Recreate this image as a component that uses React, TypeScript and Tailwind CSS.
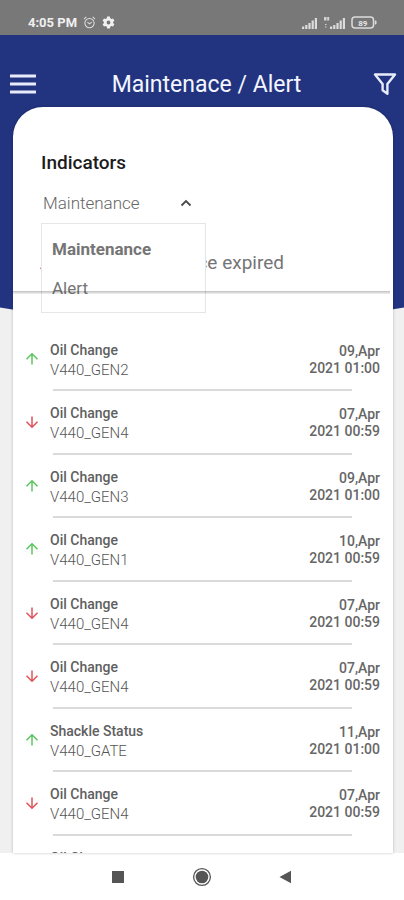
import React from 'react';

type Entry = {
  title: string;
  device: string;
  day: string;
  time: string;
  up?: boolean;
};

const entries: Entry[] = [
  { title: 'Oil Change', device: 'V440_GEN2', day: '09,Apr', time: '2021 01:00', up: true },
  { title: 'Oil Change', device: 'V440_GEN4', day: '07,Apr', time: '2021 00:59' },
  { title: 'Oil Change', device: 'V440_GEN3', day: '09,Apr', time: '2021 01:00', up: true },
  { title: 'Oil Change', device: 'V440_GEN1', day: '10,Apr', time: '2021 00:59', up: true },
  { title: 'Oil Change', device: 'V440_GEN4', day: '07,Apr', time: '2021 00:59' },
  { title: 'Oil Change', device: 'V440_GEN4', day: '07,Apr', time: '2021 00:59' },
  { title: 'Shackle Status', device: 'V440_GATE', day: '11,Apr', time: '2021 01:00', up: true },
  { title: 'Oil Change', device: 'V440_GEN4', day: '07,Apr', time: '2021 00:59' },
  { title: 'Oil Change', device: 'V440_GEN4', day: '07,Apr', time: '2021 00:59' },
];

const Arrow: React.FC<{ up?: boolean }> = ({ up }) => (
  <svg
    viewBox="0 0 14 14"
    fill="none"
    strokeWidth="1.5"
    className={up ? 'size-[14px] shrink-0 stroke-[#5cc560]' : 'size-[14px] shrink-0 rotate-180 stroke-[#e0525a]'}
  >
    <path d="M7 12.6V2.2M1.5 7.3 7 1.8l5.5 5.5" />
  </svg>
);

const Signal: React.FC = () => (
  <svg viewBox="0 0 16 12" className="h-3 w-4 fill-[#dcdcdc]">
    <path d="M0 9.5h2.2V12H0zM3.2 8h2.2v4H3.2zM6.4 6h2.2v6H6.4zM9.6 3.5h2.2V12H9.6zM12.8 1H15v11h-2.2z" />
  </svg>
);

const StatusBar: React.FC = () => (
  <div className="flex h-[35px] shrink-0 items-center bg-[#787878] pt-[10px] pr-[27px] pl-7 text-[13px] font-bold text-[#f0f0f0]">
    <span>4:05 PM</span>
    <svg viewBox="0 0 14 14" fill="none" stroke="#dedede" strokeWidth="1.1" className="ml-[6px] size-[13px]">
      <circle cx="7" cy="7.6" r="5" />
      <path d="M1 3.4 3.6 1M13 3.4 10.4 1M4.8 6.6 7 8.4l2.4-1.8" />
    </svg>
    <svg viewBox="0 0 24 24" className="ml-[6px] size-[13px] fill-[#f0f0f0]">
      <path
        fillRule="evenodd"
        d="M9.5 1h5l.7 3.3 2 1.1 3.2-1 2.5 4.3-2.5 2.3v2l2.5 2.3-2.5 4.3-3.2-1-2 1.1-.7 3.3h-5l-.7-3.3-2-1.1-3.2 1-2.5-4.3L3.6 13v-2L1.1 8.7l2.5-4.3 3.2 1 2-1.1zM12 8.5a3.5 3.5 0 1 0 0 7 3.5 3.5 0 0 0 0-7z"
      />
    </svg>
    <div className="ml-auto flex items-center gap-[5px]">
      <Signal />
      <div className="flex">
        <svg viewBox="0 0 7 12" className="h-3 w-[7px] fill-[#d4d4d4]">
          <path d="M1 0h2.5v3.5H1zM4.2 0h2v3.5h-2zM2 7h1.5v1H2zM2 9.5h1.5v1H2z" />
        </svg>
        <Signal />
      </div>
      <svg viewBox="0 0 26 13" className="h-[13px] w-[26px]">
        <rect x="1" y="1" width="21.5" height="11" rx="3" fill="none" stroke="#dcdcdc" strokeWidth="1.5" />
        <path d="M23.8 4.5h.7q1 0 1 1v2q0 1-1 1h-.7z" fill="#dcdcdc" />
        <text x="11.8" y="9.5" textAnchor="middle" fontSize="8" fill="#e6e6e6">
          89
        </text>
      </svg>
    </div>
  </div>
);

const Header: React.FC = () => (
  <header className="relative flex h-[72px] items-center justify-between px-[10px] pt-7 text-[#f4f6ff]">
    <button aria-label="Menu" className="pb-[2px]">
      <svg viewBox="0 0 26 20" stroke="#e8ecfa" strokeWidth="2.8" className="h-5 w-[26px]">
        <path d="M0 2h26M0 10h26M0 18h26" />
      </svg>
    </button>
    <h1 className="pl-1 text-[23px] leading-7">Maintenace / Alert</h1>
    <button aria-label="Filter" className="-mr-[3px] pb-[2px]">
      <svg viewBox="0 0 24 24" fill="none" stroke="#e8ecfa" strokeWidth="2.4" className="size-6">
        <path d="M2 2.5h20l-7.6 9.5v9.7l-4.8-3.5V12z" strokeLinejoin="round" />
      </svg>
    </button>
  </header>
);

const IndicatorPicker: React.FC = () => (
  <section className="relative h-[184px] shrink-0 px-7 pt-11">
    <label htmlFor="indicator" className="block text-[19px] leading-6 font-medium text-[#1c1c1c]">
      Indicators
    </label>
    <div className="relative mt-4 w-[165px]">
      <select
        id="indicator"
        defaultValue="Maintenance"
        className="h-[26px] w-full appearance-none bg-transparent pl-[2px] text-[17px] font-light text-[#666]"
      >
        <option>Maintenance</option>
        <option>Alert</option>
      </select>
      <svg
        viewBox="0 0 12 8"
        fill="none"
        stroke="#4a4a4a"
        strokeWidth="1.8"
        className="pointer-events-none absolute top-2 right-[14px] h-2 w-3"
      >
        <path d="M1.5 6.5 6 2l4.5 4.5" />
      </svg>
      <ul className="absolute top-full left-0 z-10 mt-[6px] w-full border border-[#e6e6e6] bg-white pt-[6px] pb-1 text-[17px] text-[#757575]">
        <li>
          <button className="block h-[39px] w-full px-[10px] text-left font-bold">Maintenance</button>
        </li>
        <li>
          <button className="block h-[39px] w-full px-[10px] text-left">Alert</button>
        </li>
      </ul>
    </div>
    <div className="-ml-[2px] mt-[34px] flex w-[245px] items-end justify-between text-[19px] leading-6 text-[#757575]">
      <Arrow />
      <span>Maintenance expired</span>
    </div>
    <hr className="absolute inset-x-0 top-full z-20 mr-[3px] h-[3px] border-0 bg-linear-to-b from-black/25 to-black/5" />
  </section>
);

const EntryRow: React.FC<{ entry: Entry }> = ({ entry }) => (
  <li className="flex shrink-0 flex-col justify-between odd:h-[63px] even:h-16">
    <div className="flex items-center pt-3 pr-[13px] pl-3">
      <div className="pb-[2px]">
        <Arrow up={entry.up} />
      </div>
      <div className="ml-[11px] flex-1 text-[15px] leading-5 font-light text-[#555]">
        <p className="text-[14px] font-medium text-[#606060]">{entry.title}</p>
        <p>{entry.device}</p>
      </div>
      <div className="text-right text-[14px] leading-[17px] font-medium text-[#666]">
        <p>{entry.day}</p>
        <p>{entry.time}</p>
      </div>
    </div>
    <hr className="mr-[41px] ml-10 h-[2px] border-0 bg-[#dadada]" />
  </li>
);

const NavBar: React.FC = () => (
  <nav className="flex h-[47px] shrink-0 items-center justify-center gap-[64px] bg-white">
    <button aria-label="Recent apps">
      <svg viewBox="0 0 20 20" className="size-5">
        <rect x="4" y="4" width="12" height="12" fill="#555" />
      </svg>
    </button>
    <button aria-label="Home">
      <svg viewBox="0 0 20 20" className="size-5">
        <circle cx="10" cy="10" r="8.4" fill="none" stroke="#555" strokeWidth="1.3" />
        <circle cx="10" cy="10" r="6.3" fill="#555" />
      </svg>
    </button>
    <button aria-label="Back">
      <svg viewBox="0 0 20 20" className="size-5">
        <path d="M3.5 10 15 3.8v12.4z" fill="#555" />
      </svg>
    </button>
  </nav>
);

const App: React.FC = () => {
  return (
    <div className="flex h-screen flex-col overflow-hidden bg-[#f0f0f0] font-[Roboto,sans-serif]">
      <StatusBar />
      <div className="relative flex min-h-0 flex-1 flex-col">
        <div className="absolute inset-x-0 top-0 h-[289px] bg-[#22347f] [clip-path:ellipse(150%_100%_at_50%_0)]" />
        <Header />
        <main className="relative mr-[11px] ml-[13px] flex min-h-0 flex-1 flex-col rounded-t-[30px] bg-white shadow-[0_0_3px_rgba(0,0,0,0.25)]">
          <IndicatorPicker />
          <ul className="flex min-h-0 flex-1 flex-col overflow-hidden pt-[37px]">
            {entries.map((entry, i) => (
              <EntryRow key={i} entry={entry} />
            ))}
          </ul>
        </main>
      </div>
      <NavBar />
    </div>
  );
};

export default App;
